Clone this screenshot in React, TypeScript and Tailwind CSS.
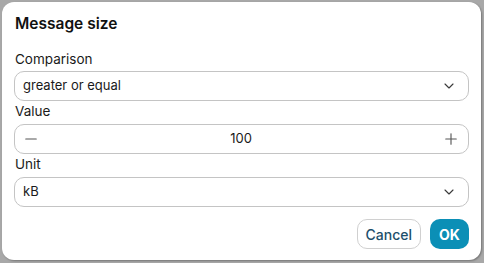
import React from 'react';
import { ChevronDown, Minus, Plus } from 'lucide-react';

function SelectBox({ value }: { value: string }) {
    return (
        <div className="h-[30px] rounded-[10px] border border-[#c4c4c4] bg-white flex items-center justify-between pl-[8px] pr-[11px]">
            <span className="text-[13px] text-[#1a1a1a]">{value}</span>
            <ChevronDown size={16} strokeWidth={1.7} className="text-[#3a3a3a]" />
        </div>
    );
}

export default function App() {
    return (
        <div className="w-[484px] h-[263px] bg-[#a8a8a8] p-[2px] pb-[3px] pr-[3px]" style={{ fontFamily: 'Inter, "Noto Sans", sans-serif' }}>
            <div className="h-full bg-white rounded-[12px] px-[12px] pt-[12px] flex flex-col shadow-[1px_1px_2px_rgba(0,0,0,0.3)]">
                <h1 className="pl-[1px] text-[15.5px] font-semibold text-[#111] leading-[20px]">Message size</h1>

                <label className="pl-[1px] mt-[17px] text-[13.5px] text-[#1a1a1a] leading-[16px]">Comparison</label>
                <div className="mt-[4px]">
                    <SelectBox value="greater or equal" />
                </div>

                <label className="pl-[1px] mt-[2px] text-[13.5px] text-[#1a1a1a] leading-[16px]">Value</label>
                <div className="mt-[5px] h-[30px] rounded-[10px] border border-[#c4c4c4] bg-white flex items-center justify-between pl-[7px] pr-[8px]">
                    <Minus size={18} strokeWidth={1.5} className="text-[#555]" />
                    <span className="text-[13px] text-[#1a1a1a]">100</span>
                    <Plus size={18} strokeWidth={1.5} className="text-[#555]" />
                </div>

                <label className="pl-[1px] mt-[2px] text-[13.5px] text-[#1a1a1a] leading-[16px]">Unit</label>
                <div className="mt-[5px]">
                    <SelectBox value="kB" />
                </div>

                <div className="mt-[12px] flex justify-end gap-[9px]">
                    <button className="h-[30px] px-[8px] rounded-[10px] border border-[#d0d0d0] bg-white text-[14px] font-medium text-[#1d4f6b]">
                        Cancel
                    </button>
                    <button className="h-[30px] w-[39px] rounded-[10px] bg-[#0b8fb6] text-[14px] font-bold text-white">
                        OK
                    </button>
                </div>
            </div>
        </div>
    );
}
